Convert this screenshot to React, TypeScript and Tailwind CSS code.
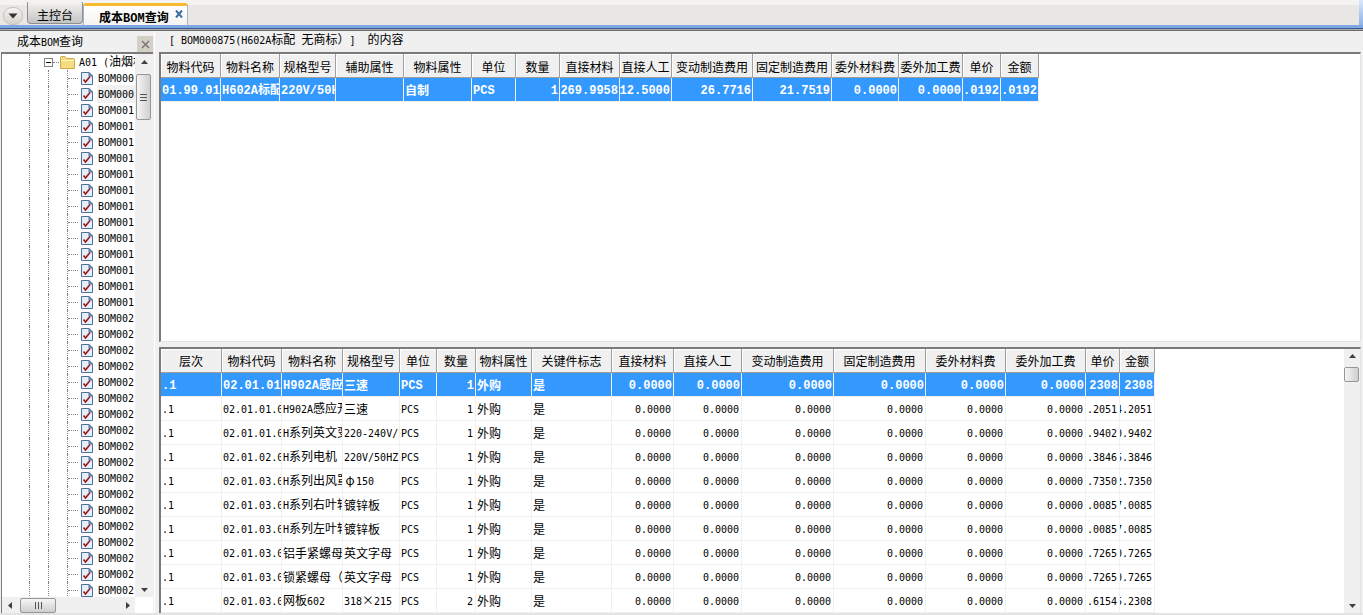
import { Fragment, type ReactNode } from "react";

type Align = "left" | "right";

interface Column {
	title: string;
	width: number;
	align?: Align;
}

const summaryColumns: Column[] = [
	{ title: "物料代码", width: 60 },
	{ title: "物料名称", width: 59 },
	{ title: "规格型号", width: 56 },
	{ title: "辅助属性", width: 68 },
	{ title: "物料属性", width: 68 },
	{ title: "单位", width: 44 },
	{ title: "数量", width: 44, align: "right" },
	{ title: "直接材料", width: 60, align: "right" },
	{ title: "直接人工", width: 52, align: "right" },
	{ title: "变动制造费用", width: 81, align: "right" },
	{ title: "固定制造费用", width: 79, align: "right" },
	{ title: "委外材料费", width: 67, align: "right" },
	{ title: "委外加工费", width: 64, align: "right" },
	{ title: "单价", width: 38, align: "right" },
	{ title: "金额", width: 38, align: "right" },
];

const summaryRows: string[][] = [
	[
		"01.99.01.",
		"H602A标配",
		"220V/50H",
		"",
		"自制",
		"PCS",
		"1",
		"269.9958",
		"12.5000",
		"26.7716",
		"21.7519",
		"0.0000",
		"0.0000",
		".0192",
		".0192",
	],
];

const detailColumns: Column[] = [
	{ title: "层次", width: 61 },
	{ title: "物料代码", width: 60 },
	{ title: "物料名称", width: 61 },
	{ title: "规格型号", width: 57 },
	{ title: "单位", width: 37 },
	{ title: "数量", width: 39, align: "right" },
	{ title: "物料属性", width: 56 },
	{ title: "关键件标志", width: 80 },
	{ title: "直接材料", width: 62, align: "right" },
	{ title: "直接人工", width: 68, align: "right" },
	{ title: "变动制造费用", width: 92, align: "right" },
	{ title: "固定制造费用", width: 92, align: "right" },
	{ title: "委外材料费", width: 80, align: "right" },
	{ title: "委外加工费", width: 80, align: "right" },
	{ title: "单价", width: 34, align: "right" },
	{ title: "金额", width: 35, align: "right" },
];

// code, name, spec, quantity, unit price, amount
const parts: string[][] = [
	["02.01.01.", "H902A感应", "三速", "1", "2308", "2308"],
	["02.01.01.0", "H902A感应开", "三速", "1", ".2051", "4.2051"],
	["02.01.01.0", "H系列英文变", "220-240V/5", "1", ".9402", "0.9402"],
	["02.01.02.0", "H系列电机", "220V/50HZ", "1", ".3846", "5.3846"],
	["02.01.03.0", "H系列出风罩", "φ150", "1", ".7350", "2.7350"],
	["02.01.03.0", "H系列右叶轮", "镀锌板", "1", ".0085", "7.0085"],
	["02.01.03.0", "H系列左叶轮", "镀锌板", "1", ".0085", "7.0085"],
	["02.01.03.0", "铝手紧螺母", "英文字母", "1", ".7265", "0.7265"],
	["02.01.03.0", "锁紧螺母（", "英文字母", "1", ".7265", "0.7265"],
	["02.01.03.0", "网板602", "318×215", "2", ".6154", "5.2308"],
];

const detailRows = parts.map(([code, name, spec, qty, price, amount]) => [
	".1",
	code,
	name,
	spec,
	"PCS",
	qty,
	"外购",
	"是",
	...Array<string>(6).fill("0.0000"),
	price,
	amount,
]);

const treeItems = [
	...Array<string>(2).fill("BOM000"),
	...Array<string>(13).fill("BOM001"),
	...Array<string>(18).fill("BOM002"),
];

// Latin runs are set in a half-width monospace next to 12px Chinese glyphs,
// the two symbols take a full Chinese cell
function Mixed({ text, bold = false }: { text: string; bold?: boolean }) {
	const runs = text.split(/([\x20-\x7e]+|[×φ])/).filter(Boolean);
	return (
		<>
			{runs.map((run, index) => {
				if (/^[×φ]/.test(run)) {
					return (
						<span key={index} className="inline-block w-3 text-center">
							{run}
						</span>
					);
				}
				if (/^[\x20-\x7e]/.test(run)) {
					return (
						<span
							key={index}
							className={
								bold
									? "font-['Liberation_Mono',monospace] text-[12px]"
									: "font-['DejaVu_Sans_Mono',monospace] text-[10px]"
							}
						>
							{run}
						</span>
					);
				}
				return <Fragment key={index}>{run}</Fragment>;
			})}
		</>
	);
}

function Grid({
	label,
	columns,
	rows,
}: {
	label: string;
	columns: Column[];
	rows: string[][];
}) {
	const total = columns.reduce((sum, column) => sum + column.width, 0);
	return (
		<table
			aria-label={label}
			className="table-fixed border-separate border-spacing-0"
			style={{ width: total }}
		>
			<colgroup>
				{columns.map((column) => (
					<col key={column.title} style={{ width: column.width }} />
				))}
			</colgroup>
			<thead>
				<tr className="h-6">
					{columns.map((column) => (
						<th
							key={column.title}
							className="overflow-hidden border-r border-b border-[#9f9f9f] bg-[#f0f0f0] p-0 pt-0.5 text-center font-normal shadow-[inset_1px_1px_0_#ffffff]"
						>
							{column.title}
						</th>
					))}
				</tr>
			</thead>
			<tbody>
				{rows.map((row, rowIndex) => {
					const selected = rowIndex === 0;
					return (
						<tr
							key={rowIndex}
							className={
								selected ? "h-6 bg-[#3399ff] font-bold text-white" : "h-6"
							}
						>
							{row.map((value, index) => (
								<td
									key={index}
									className="border-r border-b border-[#f0f0f0] p-0 pt-px"
								>
									<div
										className={
											columns[index].align === "right"
												? selected
													? "flex justify-end overflow-hidden pr-px"
													: "flex justify-end overflow-hidden pr-0.5"
												: "flex overflow-hidden pl-px"
										}
									>
										<span className="shrink-0">
											<Mixed text={value} bold={selected} />
										</span>
									</div>
								</td>
							))}
						</tr>
					);
				})}
			</tbody>
		</table>
	);
}

const arrowPaths = {
	up: "M0 5 L3.5 1 L7 5 Z",
	down: "M0 2 L3.5 6 L7 2 Z",
	left: "M5 0 L1 3.5 L5 7 Z",
	right: "M2 0 L6 3.5 L2 7 Z",
};

function ScrollArrow({ direction }: { direction: keyof typeof arrowPaths }) {
	return (
		<button
			type="button"
			aria-label={`Scroll ${direction}`}
			className="flex h-4 w-4 shrink-0 items-center justify-center"
		>
			<svg width="7" height="7" viewBox="0 0 7 7">
				<path d={arrowPaths[direction]} fill="#404040" />
			</svg>
		</button>
	);
}

function DocIcon() {
	return (
		<svg width="12" height="13" viewBox="0 0 12 13" className="shrink-0">
			<path
				d="M0.5 0.5 H8 L11.5 4 V12.5 H0.5 Z"
				fill="#e4f0fa"
				stroke="#4c7196"
			/>
			<path d="M8 0.5 V4 H11.5 Z" fill="#7fa6cc" stroke="#4c7196" />
			<path
				d="M2.5 7.5 L4.5 10 L9 4.5"
				fill="none"
				stroke="#a81218"
				strokeWidth="1.6"
			/>
		</svg>
	);
}

function FolderIcon() {
	return (
		<svg width="15" height="13" viewBox="0 0 15 13" className="shrink-0">
			<path
				d="M0.5 12.5 V1.5 Q0.5 0.5 1.5 0.5 H5 L6.5 2.5 H13.5 Q14.5 2.5 14.5 3.5 V12.5 Z"
				fill="#f6dc80"
				stroke="#cfa845"
			/>
			<path d="M1 4.5 H14" stroke="#fff3bd" />
		</svg>
	);
}

function Guide({ children }: { children?: ReactNode }) {
	return (
		<span className="flex w-[19px] shrink-0 items-center self-stretch border-l border-dotted border-[#808080]">
			{children}
		</span>
	);
}

function Tree() {
	return (
		<ul className="min-h-0 min-w-0 flex-1 overflow-hidden whitespace-pre pl-[27px] leading-4">
			<li className="flex h-4 items-center">
				<span className="w-[19px] shrink-0 self-stretch border-l border-dotted border-[#808080]" />
				<button
					type="button"
					aria-label="Collapse A01"
					className="-ml-1 flex h-[9px] w-[9px] shrink-0 items-center justify-center border border-[#808080] bg-white"
				>
					<span className="h-px w-[5px] bg-black" />
				</button>
				<span className="mr-px w-1.5 shrink-0 border-t border-dotted border-[#808080]" />
				<FolderIcon />
				<span className="ml-1">
					<Mixed text="A01 (油烟机" />
				</span>
			</li>
			{treeItems.map((item, index) => (
				<li key={index} className="flex h-4 items-center">
					<Guide />
					<Guide />
					<Guide>
						<span className="w-2.5 border-t border-dotted border-[#808080]" />
					</Guide>
					<span className="-ml-[5px] flex shrink-0">
						<DocIcon />
					</span>
					<span
						className={
							index === 1
								? "ml-1 flex-1 bg-[#f0f0f0] pl-px"
								: "ml-1 flex-1 pl-px"
						}
					>
						<Mixed text={item} />
					</span>
				</li>
			))}
		</ul>
	);
}

function TabBar() {
	return (
		<nav className="flex h-[25px] items-end bg-[linear-gradient(#f4f3f1_5px,#e8e7e4_5px)]">
			<button
				type="button"
				aria-label="Menu"
				className="mr-1 ml-[3px] flex h-[18px] w-5 items-center justify-center rounded-full border border-[#c4c2be] bg-linear-to-b from-[#f4f3f0] to-[#d6d3cd]"
			>
				<svg width="10" height="6" viewBox="0 0 10 6">
					<path d="M0.5 0.5 H9.5 L5 5.5 Z" fill="#333333" />
				</svg>
			</button>
			<button
				type="button"
				className="mb-px flex h-[22px] w-14 items-end justify-center rounded-b-[4px] border-r border-b border-l border-[#8d8d8d] bg-linear-to-b from-[#f4f3f1] to-[#c3c3c3]"
			>
				主控台
			</button>
			<div className="flex h-[22px] w-[105px] items-center rounded-t-[3px] border-t-[3px] border-r border-l border-t-[#f9b92c] border-r-[#a8b4c8] border-l-[#a8b4c8] bg-linear-to-b from-white to-[#f4f3f1] pl-[15px] font-bold">
				<button type="button" className="whitespace-nowrap pt-1 font-bold">
					<Mixed text="成本BOM查询" bold />
				</button>
				<button type="button" aria-label="Close tab" className="mb-1 ml-1.5">
					<svg width="8" height="8" viewBox="0 0 8 8">
						<path d="M1 0.5 L7 7.5 M7 0.5 L1 7.5" stroke="#3a6ea5" strokeWidth="2" />
					</svg>
				</button>
			</div>
		</nav>
	);
}

export default function App() {
	return (
		<div className="flex h-screen flex-col overflow-hidden bg-[#f0f0f0] font-['Noto_Sans_CJK_SC','Liberation_Sans',sans-serif] text-[12px] leading-4 text-black [text-spacing-trim:space-all]">
			<header className="shrink-0">
				<div className="flex">
					<div className="min-w-0 flex-1">
						<TabBar />
					</div>
					<div className="w-1 bg-linear-to-b from-[#dbe8fa] to-[#8fb2e8]" />
				</div>
				<div className="h-[3px] bg-[#7da7e3]" />
				<div className="h-px bg-[#34578f]" />
				<div className="h-px bg-[#b0aeaa]" />
				<div className="h-px bg-[#696969]" />
			</header>

			<main className="flex min-h-0 flex-1 border-b-2 border-[#e3e3e3]">
				<aside className="flex w-[153px] shrink-0 flex-col pl-px">
					<div className="flex h-[21px] shrink-0 items-end justify-between pl-4">
						<h2 className="pb-px">
							<Mixed text="成本BOM查询" />
						</h2>
						<button
							type="button"
							aria-label="Close panel"
							className="flex h-4 w-4 items-center justify-center bg-[#d4d0c8]"
						>
							<svg width="9" height="9" viewBox="0 0 9 9">
								<path d="M1 1 L8 8 M8 1 L1 8" stroke="#777777" strokeWidth="1.5" />
							</svg>
						</button>
					</div>
					<div className="flex min-h-0 flex-1 flex-col border-t-2 border-l border-[#7a7a7a] bg-white">
						<div className="flex min-h-0 flex-1">
							<Tree />
							<div className="flex w-[18px] shrink-0 flex-col bg-[#f0f0f0] pl-px">
								<ScrollArrow direction="up" />
								<div className="mt-1 flex h-[46px] w-[15px] flex-col items-center justify-center gap-0.5 rounded-[2px] border border-[#979797] bg-linear-to-r from-[#f5f5f5] to-[#cfcfd2]">
									<span className="h-px w-[7px] bg-[#555555]" />
									<span className="h-px w-[7px] bg-[#555555]" />
									<span className="h-px w-[7px] bg-[#555555]" />
								</div>
								<div className="flex-1" />
								<ScrollArrow direction="down" />
							</div>
						</div>
						<div className="mr-[18px] flex h-4 shrink-0 items-center bg-[#f0f0f0]">
							<ScrollArrow direction="left" />
							<div className="ml-0.5 flex h-[15px] w-9 items-center justify-center gap-0.5 rounded-[2px] border border-[#979797] bg-linear-to-b from-[#f5f5f5] to-[#cfcfd2]">
								<span className="h-[7px] w-px bg-[#555555]" />
								<span className="h-[7px] w-px bg-[#555555]" />
								<span className="h-[7px] w-px bg-[#555555]" />
							</div>
							<div className="flex-1" />
							<ScrollArrow direction="right" />
						</div>
					</div>
				</aside>

				<div className="ml-px mr-1 w-px bg-white" />

				<section className="flex min-w-0 flex-1 flex-col pr-0.5">
					<h1 className="h-[21px] shrink-0 whitespace-pre pl-2.5">
						<Mixed text="[ BOM000875(H602A标配 无商标）]  的内容" />
					</h1>
					<div className="min-h-0 flex-[289] overflow-hidden whitespace-pre border-t-2 border-r border-b border-l-2 border-t-[#7a7a7a] border-r-[#e3e3e3] border-b-[#e3e3e3] border-l-[#7a7a7a] bg-white">
						<Grid label="BOM汇总" columns={summaryColumns} rows={summaryRows} />
					</div>
					<div className="mt-px h-1 shrink-0" />
					<div className="flex min-h-0 flex-[266] overflow-hidden whitespace-pre border-t-2 border-r border-l-2 border-t-[#7a7a7a] border-r-[#e3e3e3] border-l-[#7a7a7a] bg-white">
						<div className="min-w-0 flex-1 overflow-hidden">
							<Grid label="BOM明细" columns={detailColumns} rows={detailRows} />
						</div>
						<div className="flex w-4 shrink-0 flex-col bg-[#f0f0f0]">
							<ScrollArrow direction="up" />
							<div className="mt-0.5 h-[15px] w-[15px] rounded-[2px] border border-[#979797] bg-linear-to-r from-[#f5f5f5] to-[#cfcfd2]" />
							<div className="flex-1" />
							<ScrollArrow direction="down" />
						</div>
					</div>
				</section>
			</main>
		</div>
	);
}
